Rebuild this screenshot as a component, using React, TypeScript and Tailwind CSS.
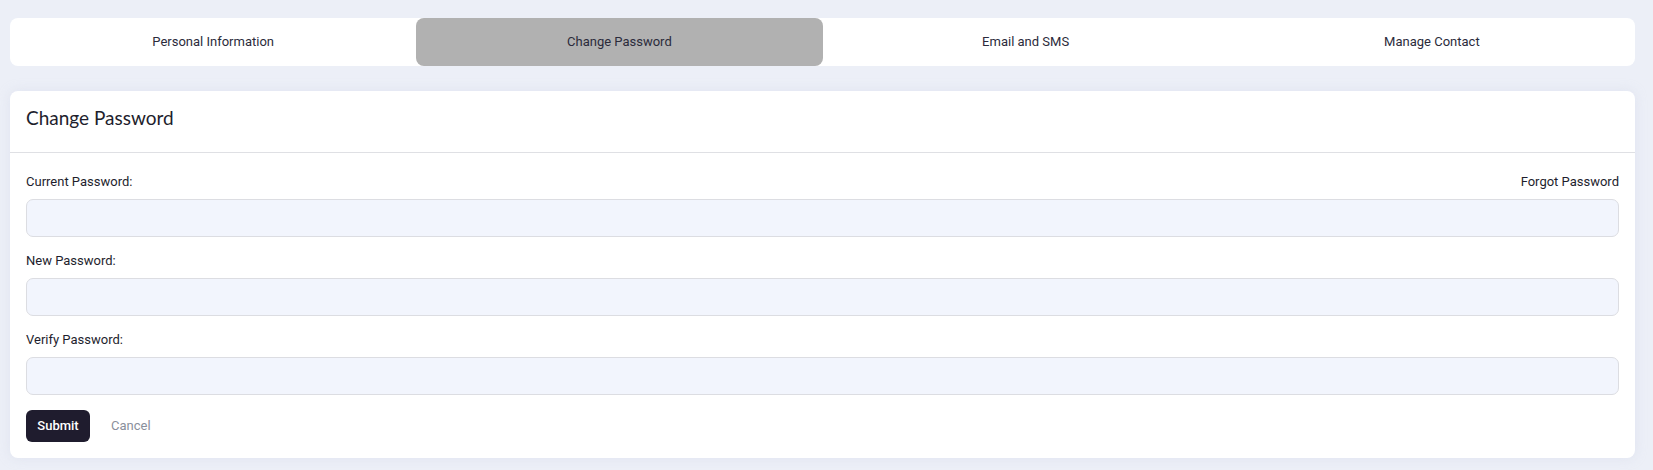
import React from "react";

const tabs = ["Personal Information", "Change Password", "Email and SMS", "Manage Contact"];

function Field({ label, right }: { label: string; right?: string }) {
  return (
    <div className="mb-[15px]">
      <div className="flex justify-between h-[18px] items-center text-[13px] leading-[18px] text-[#1e1e2d]">
        <span>{label}</span>
        {right ? <span>{right}</span> : null}
      </div>
      <div className="mt-[8px] h-[38px] rounded-[7px] border border-[#dcdde2] bg-[#f2f5fd]" />
    </div>
  );
}

export default function App() {
  return (
    <div
      className="h-screen w-full overflow-hidden bg-[#eceff7] px-[10px] pt-[18px]"
      style={{ fontFamily: "Roboto, 'Liberation Sans', sans-serif" }}
    >
      <div className="mr-[8px] grid h-[48px] grid-cols-4 rounded-[8px] bg-white">
        {tabs.map((t, i) => (
          <div
            key={t}
            className={
              i === 1
                ? "flex items-center justify-center rounded-[8px] bg-[#b1b1b1] text-[13px] text-[#2b2b3b]"
                : "flex items-center justify-center text-[13px] text-[#2b2b3b]"
            }
          >
            {t}
          </div>
        ))}
      </div>

      <div className="mr-[8px] mt-[25px] rounded-[8px] bg-white shadow-[0_0_12px_rgba(200,205,225,0.35)]">
        <div className="flex h-[62px] items-center border-b border-[#dfe0e4] px-[16px] pb-[6px]">
          <h2
            className="text-[19px] font-normal text-[#1e1e2d]"
            style={{ fontFamily: "Lato, 'Open Sans', sans-serif" }}
          >
            Change Password
          </h2>
        </div>
        <div className="px-[16px] pt-[20px] pb-[16px]">
          <Field label="Current Password:" right="Forgot Password" />
          <Field label="New Password:" />
          <Field label="Verify Password:" />
          <div className="flex items-center gap-[21px]">
            <button className="h-[32px] w-[64px] rounded-[6px] bg-[#1f1c2e] text-[13px] font-medium text-white">
              Submit
            </button>
            <button className="text-[13px] text-[#8a8f9c]">Cancel</button>
          </div>
        </div>
      </div>
    </div>
  );
}
